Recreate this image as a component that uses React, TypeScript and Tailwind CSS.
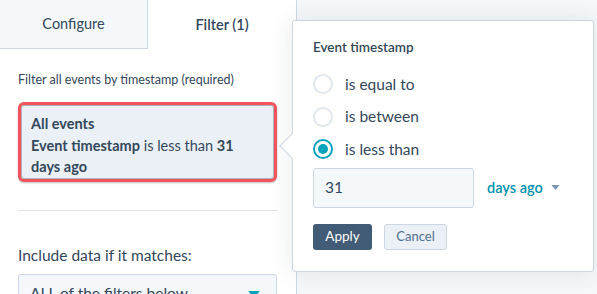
import React from 'react';

const Radio: React.FC<{ label: string; checked?: boolean }> = ({ label, checked }) => (
  <div className="flex items-center h-[32.5px]">
    <span
      className={`w-[20px] h-[20px] rounded-full border-2 flex items-center justify-center bg-white ${
        checked ? 'border-[#00a4bd]' : 'border-[#dfe6ee]'
      }`}
    >
      {checked && <span className="w-[10px] h-[10px] rounded-full bg-[#00a4bd]" />}
    </span>
    <span className="ml-[12px] text-[15.5px] text-[#33475b]">{label}</span>
  </div>
);

const Caret: React.FC<{ className?: string }> = ({ className }) => (
  <svg width="10" height="6" viewBox="0 0 10 6" className={className}>
    <path d="M0 0 L10 0 L5 6 Z" fill="currentColor" />
  </svg>
);

const App: React.FC = () => {
  return (
    <div
      className="relative w-[597px] h-[294px] overflow-hidden bg-[#f5f8fa] flex text-[#33475b]"
      style={{ fontFamily: 'Lato, "Open Sans", sans-serif' }}
    >
      {/* Left panel */}
      <div className="w-[297px] h-full shrink-0 bg-white border-r border-[#cbd6e2] flex flex-col">
        <div className="flex h-[49px] shrink-0">
          <div className="w-[148px] bg-[#f5f8fa] border-r border-b border-[#cbd6e2] flex items-center justify-center text-[14.5px]">
            Configure
          </div>
          <div className="flex-1 flex items-center justify-center text-[14.5px] font-semibold">Filter (1)</div>
        </div>

        <div className="px-[18px] shrink-0">
          <div className="mt-[23px] text-[12.5px] leading-[16px]">Filter all events by timestamp (required)</div>

          <div className="mt-[14px] h-[80px] w-[259px] rounded-[6px] border-[3px] border-[#f2545b] bg-[#eaf0f6] pl-[10px] pt-[8px] text-[14.5px] leading-[21.5px] shadow-[inset_0_0_0_1px_rgba(60,70,80,0.35),0_1px_2px_rgba(0,0,0,0.25)]">
            <div className="font-bold">All events</div>
            <div>
              <span className="font-bold">Event timestamp</span> is less than <span className="font-bold">31</span>
            </div>
            <div className="font-bold">days ago</div>
          </div>

          <div className="mt-[28px] border-t border-[#dfe3eb] w-[259px]" />

          <div className="mt-[34px] text-[15.5px] leading-[20px]">Include data if it matches:</div>

          <div className="mt-[9px] w-[259px] h-[40px] rounded-[3px] border border-[#cbd6e2] bg-[#f5f8fa] flex items-center justify-between pl-[11px] pr-[16px]">
            <span className="text-[15.5px]">ALL of the filters below</span>
            <Caret className="text-[#00a4bd] w-[12px] h-[7px]" />
          </div>
        </div>
      </div>

      {/* Popover */}
      <div className="absolute left-[292px] top-[20px] w-[302px] h-[252px] bg-white border border-[#cbd6e2] rounded-[3px] shadow-[0_0_24px_rgba(30,50,70,0.1)] pl-[20px]">
        <div className="absolute left-[-10px] top-[116px] w-[18px] h-[18px] bg-white border-l border-b border-[#cbd6e2] rotate-45" />
        <div className="relative">
          <div className="mt-[17px] text-[13.5px] font-semibold leading-[18px]">Event timestamp</div>
          <div className="mt-[12px]">
            <Radio label="is equal to" />
            <Radio label="is between" />
            <Radio label="is less than" checked />
          </div>
          <div className="mt-[2px] flex items-center">
            <div className="w-[161px] h-[40px] rounded-[3px] border border-[#cbd6e2] bg-[#f5f8fa] flex items-center pl-[11px] text-[15.5px]">
              31
            </div>
            <div className="ml-[13px] flex items-center text-[#0091ae] font-semibold text-[14.5px]">
              days ago
              <Caret className="ml-[8px] text-[#7c98b6] w-[9px] h-[5px]" />
            </div>
          </div>
          <div className="mt-[16px] flex gap-[12px]">
            <div className="w-[59px] h-[26px] rounded-[3px] bg-[#425b76] text-white text-[13.5px] flex items-center justify-center">
              Apply
            </div>
            <div className="w-[63px] h-[26px] rounded-[3px] bg-[#eaf0f6] border border-[#cbd6e2] text-[#506e91] text-[13px] flex items-center justify-center">
              Cancel
            </div>
          </div>
        </div>
      </div>
    </div>
  );
};

export default App;
